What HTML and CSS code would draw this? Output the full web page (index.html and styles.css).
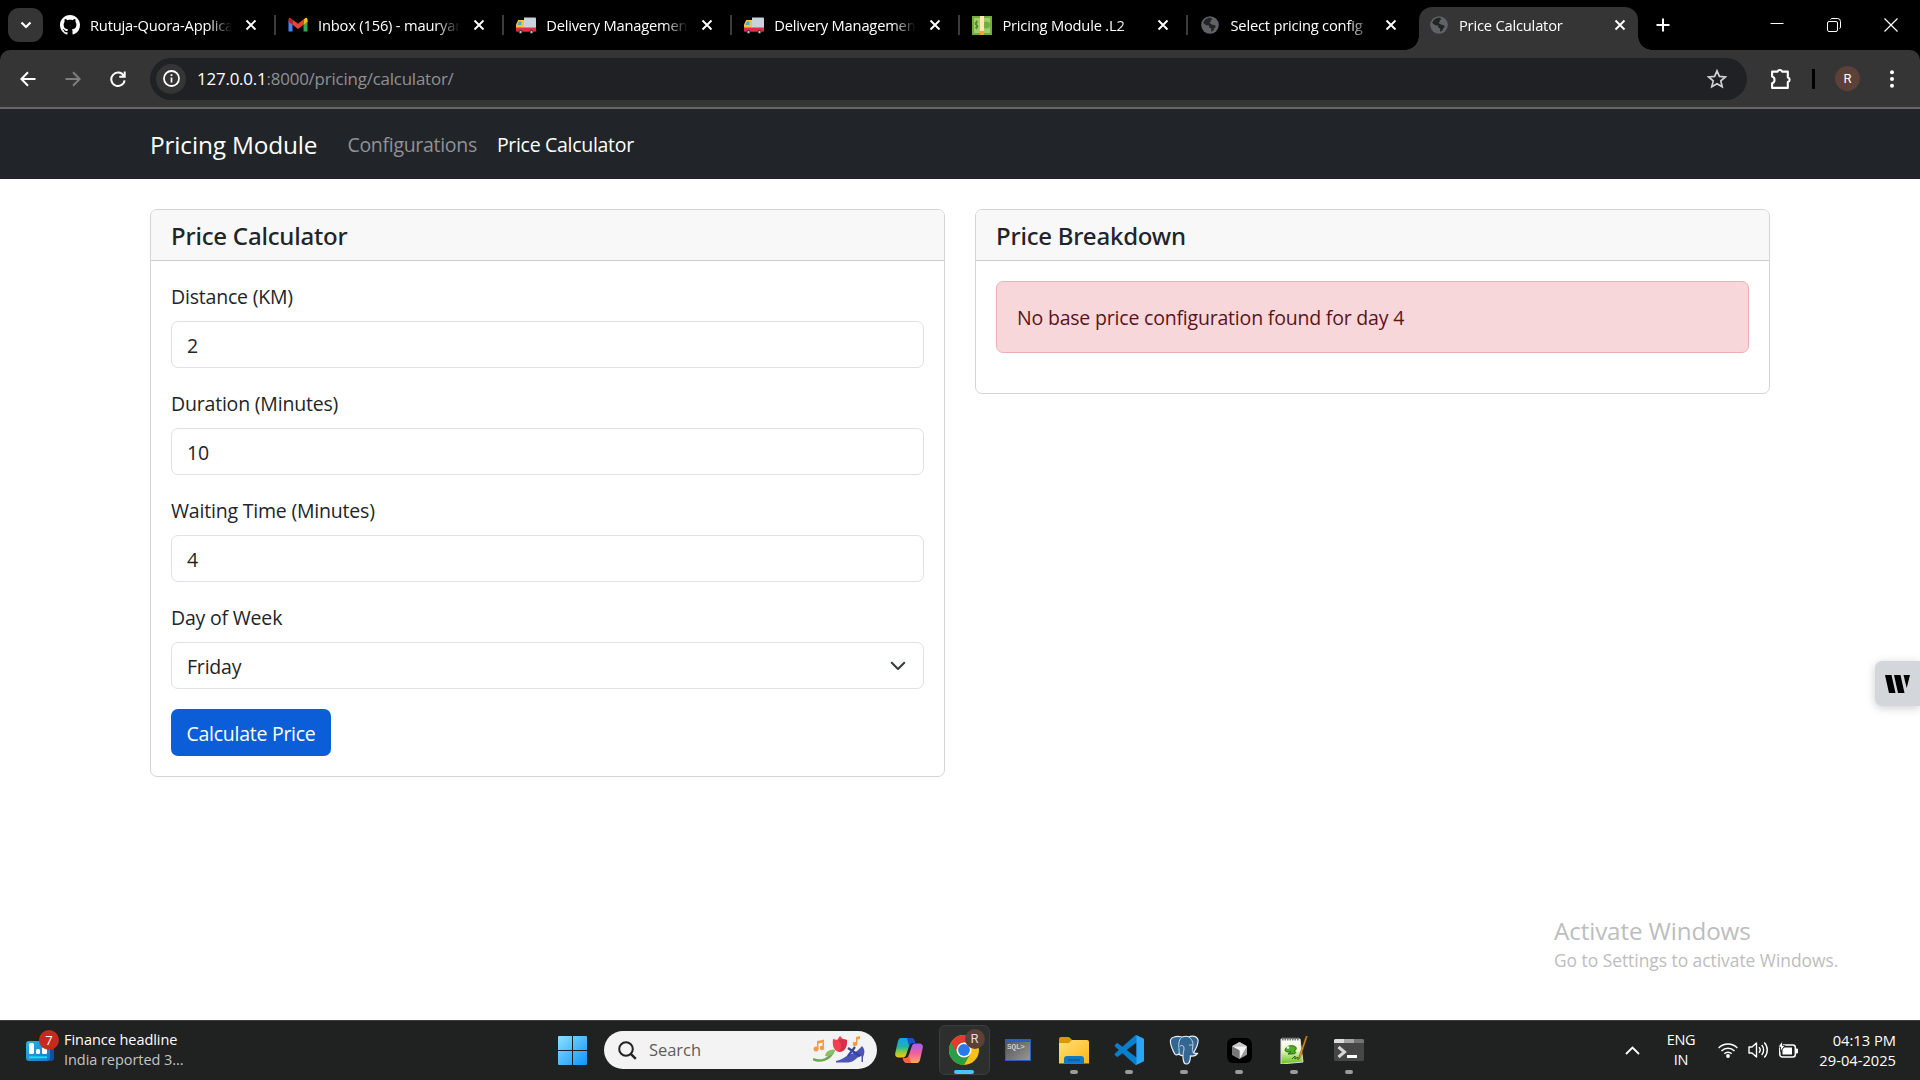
FILE: index.html
```html
<!DOCTYPE html>
<html lang="en">
<head>
<meta charset="utf-8">
<title>Price Calculator</title>
<link rel="stylesheet" href="styles.css">
</head>
<body>
<svg class="defs" aria-hidden="true">
  <defs>
    <linearGradient id="g-win" x1="0" y1="0" x2="1" y2="1"><stop offset="0" stop-color="#8be0ff"/><stop offset="1" stop-color="#0f94fb"/></linearGradient>
    <linearGradient id="g-folder" x1="0" y1="0" x2="1" y2="1"><stop offset="0" stop-color="#ffe07a"/><stop offset="1" stop-color="#fdb714"/></linearGradient>
    <linearGradient id="g-news" x1="0" y1="0" x2="1" y2="1"><stop offset="0" stop-color="#27b7dd"/><stop offset="1" stop-color="#1a73d0"/></linearGradient>
    <linearGradient id="g-cop1" x1="0" y1="0" x2="0" y2="1"><stop offset="0" stop-color="#12a2ee"/><stop offset=".45" stop-color="#1fb4b0"/><stop offset=".75" stop-color="#9ccb30"/><stop offset="1" stop-color="#f3c71c"/></linearGradient>
    <linearGradient id="g-cop2" x1="0" y1="0" x2="0" y2="1"><stop offset="0" stop-color="#a25ff0"/><stop offset=".5" stop-color="#f0609d"/><stop offset="1" stop-color="#ffab5c"/></linearGradient>
    <linearGradient id="g-npp" x1="0" y1="0" x2="0" y2="1"><stop offset="0" stop-color="#fff"/><stop offset=".45" stop-color="#e9f7c8"/><stop offset="1" stop-color="#5fc414"/></linearGradient>
    <symbol id="close" viewBox="0 0 12 12"><path d="M1.5 1.5l9 9M10.500 1.500l-9 9" stroke="#fff" stroke-width="1.900" fill="none"/></symbol>
    <symbol id="truck" viewBox="0 0 20 20"><path d="M8 2.500h11a1 1 0 0 1 1 1V13H8z" fill="#c9d3de"/><path d="M2.200 5H8v8H0V9.500z" fill="#f9c43c"/><path d="M2.800 6.500h2.700V10H1.500z" fill="#4aa5e8"/><path d="M0 12.500h20v3.300a1 1 0 0 1-1 1H1a1 1 0 0 1-1-1z" fill="#dd2e44"/><circle cx="4.500" cy="17" r="2" fill="#30363b"/><circle cx="4.500" cy="17" r="1" fill="#ccd6dd"/><circle cx="15.500" cy="17" r="2" fill="#30363b"/><circle cx="15.500" cy="17" r="1" fill="#ccd6dd"/></symbol>
    <symbol id="globe" viewBox="0 0 18 18"><circle cx="9" cy="9" r="8.800" fill="#5f6368"/><path d="M10 1.800c-3.500-.5-6.800 1.800-7.800 5.200l3 2.200 2.800.2.300 2.300 2 .8-.3 3.200c2.700-.4 3-2.300 3.200-3.400l1.500-1-.6-2.100-3.300-.6-2.400-1.800 1.300-1 .2-1.700 1.700-.5z" fill="#242424"/></symbol>
  </defs>
</svg>

<header class="browser">
  <div class="tabstrip">
    <div class="tab-search"><svg width="12" height="8" viewBox="0 0 12 8"><path d="M1.500 1.500L6 6l4.500-4.500" fill="none" stroke="#fff" stroke-width="2.200"/></svg></div>
    <div class="tab"><svg class="fav" viewBox="0 0 16 16"><path fill="#fff" d="M8 0C3.580 0 0 3.580 0 8c0 3.540 2.290 6.530 5.470 7.590.4.070.55-.17.55-.38 0-.19-.01-.82-.01-1.490-2.010.37-2.530-.49-2.690-.94-.09-.23-.48-.94-.82-1.130-.28-.15-.68-.52-.01-.53.63-.01 1.080.58 1.230.82.72 1.210 1.870.87 2.330.66.070-.52.28-.87.51-1.070-1.780-.2-3.640-.89-3.640-3.950 0-.87.31-1.590.82-2.150-.08-.2-.36-1.020.08-2.120 0 0 .67-.21 2.200.82.64-.18 1.320-.27 2-.27s1.360.09 2 .27c1.530-1.040 2.200-.82 2.200-.82.44 1.100.16 1.920.08 2.120.51.56.82 1.270.82 2.150 0 3.070-1.870 3.750-3.650 3.950.29.25.54.73.54 1.480 0 1.070-.01 1.930-.01 2.200 0 .21.15.46.55.38A8 8 0 0 0 16 8c0-4.420-3.580-8-8-8z"/></svg><span class="tab-title">Rutuja-Quora-Applica</span><svg class="x"><use href="#close"/></svg></div>
    <div class="tab"><svg class="fav" viewBox="0 0 20 20"><path d="M.5 5v11.500h4V8z" fill="#4285f4"/><path d="M19.500 5v11.500h-4V8z" fill="#34a853"/><path d="M15.500 4.500l2-1.500c1-.6 2 0 2 1.500v2.300l-4 3z" fill="#fbbc04"/><path d="M4.500 4.500l-2-1.500c-1-.6-2 0-2 1.500v2.300l4 3z" fill="#c5221f"/><path d="M4.500 4.500L10 8.700l5.500-4.200v5.300L10 13.900 4.500 9.800z" fill="#ea4335"/></svg><span class="tab-title">Inbox (156) - mauryar</span><svg class="x"><use href="#close"/></svg></div>
    <div class="tab"><svg class="fav"><use href="#truck"/></svg><span class="tab-title">Delivery Managemen</span><svg class="x"><use href="#close"/></svg></div>
    <div class="tab"><svg class="fav"><use href="#truck"/></svg><span class="tab-title">Delivery Managemen</span><svg class="x"><use href="#close"/></svg></div>
    <div class="tab"><svg class="fav" viewBox="0 0 20 20"><path fill="#71ae3c" d="M0 1h20v19H0z"/><path d="M2 3h16v15H2z" fill="#a1cf6b"/><circle cx="14.500" cy="10" r="3.500" fill="#71ae3c"/><path d="M8 1h4v15H8z" fill="#ffe8b6"/><path d="M8 16h4v4H8z" fill="#f4a62a"/><path d="M6 7c-3-1-3.500 2.500-1.500 3S6 13.500 3 12.500M4.600 5.500v8.700" stroke="#4d872a" stroke-width="1.100" fill="none"/></svg><span class="tab-title">Pricing Module .L2</span><svg class="x"><use href="#close"/></svg></div>
    <div class="tab no-divider"><svg class="fav globe"><use href="#globe"/></svg><span class="tab-title">Select pricing config</span><svg class="x"><use href="#close"/></svg></div>
    <div class="tab active"><svg class="fav globe"><use href="#globe"/></svg><span class="tab-title">Price Calculator</span><svg class="x"><use href="#close"/></svg></div>
    <svg class="new-tab" width="14" height="14" viewBox="0 0 14 14"><path d="M7 .5v13M.5 7h13" stroke="#fff" stroke-width="2"/></svg>
    <div class="window-controls">
      <svg width="14" height="14" viewBox="0 0 14 14"><path d="M.5 5.500h13" stroke="#fff"/></svg>
      <svg width="14" height="14" viewBox="0 0 14 14"><rect x=".5" y="3.500" width="10" height="10" rx="1.500" fill="none" stroke="#fff"/><path d="M3.500 1.500c.3-.7.800-1 1.500-1h5.500a3 3 0 0 1 3 3V9c0 .7-.3 1.200-1 1.500" fill="none" stroke="#fff"/></svg>
      <svg width="14" height="14" viewBox="0 0 14 14"><path d="M.5.5l13 13M13.500.5l-13 13" stroke="#fff" stroke-width="1.200"/></svg>
    </div>
  </div>
  <div class="toolbar">
    <svg class="tool" viewBox="0 0 16 16"><path d="M15.500 8H1.500M8 1.300L1.400 8 8 14.700" fill="none" stroke="#fff" stroke-width="2"/></svg>
    <svg class="tool" viewBox="0 0 16 16"><path d="M.5 8h14M8 1.300L14.600 8 8 14.700" fill="none" stroke="#7e7e7e" stroke-width="2"/></svg>
    <svg class="tool" viewBox="0 0 16 16"><path d="M13.700 4.800A6.700 6.700 0 1 0 14.600 9.300M14.700.5v5.300H9.300" fill="none" stroke="#fff" stroke-width="2"/></svg>
    <div class="omnibox">
      <div class="site-info"><svg width="17" height="17" viewBox="0 0 17 17"><circle cx="8.500" cy="8.500" r="7.500" fill="none" stroke="#fff" stroke-width="1.800"/><path d="M8.500 7.500v5M8.500 4.300v1.800" stroke="#fff" stroke-width="1.700"/></svg></div>
      <span class="url">127.0.0.1<span>:8000/pricing/calculator/</span></span>
      <svg class="star" width="20" height="20" viewBox="0 0 20 20"><path d="M10 1.800l2.400 5.600 6 .5-4.600 4 1.400 5.900L10 14.700l-5.200 3.100 1.400-5.900-4.600-4 6-.5z" fill="none" stroke="#d0d0d0" stroke-width="1.700"/></svg>
    </div>
    <svg class="ext" width="22" height="22" viewBox="0 0 21 21"><path d="M2 3.500h5.200a2.300 2.300 0 0 1 4.400 0H17V9a2.200 2.200 0 0 1 0 4.300V19H2v-4.500a3.300 3.300 0 0 0 0-6.300z" fill="none" stroke="#fff" stroke-width="2" stroke-linejoin="round"/></svg>
    <div class="tool-divider"></div>
    <div class="avatar">R</div>
    <svg class="menu" width="4" height="18" viewBox="0 0 4 18"><g fill="#fff"><circle cx="2" cy="2.200" r="2"/><circle cx="2" cy="9" r="2"/><circle cx="2" cy="15.800" r="2"/></g></svg>
  </div>
</header>

<nav class="navbar">
  <div class="container">
    <a class="brand">Pricing Module</a>
    <a class="nav-link">Configurations</a>
    <a class="nav-link current">Price Calculator</a>
  </div>
</nav>

<main class="page">
  <div class="container row">
    <section class="card">
      <h5 class="card-header">Price Calculator</h5>
      <form class="card-body">
        <div class="field"><label>Distance (KM)</label><div class="control">2</div></div>
        <div class="field"><label>Duration (Minutes)</label><div class="control">10</div></div>
        <div class="field"><label>Waiting Time (Minutes)</label><div class="control">4</div></div>
        <div class="field"><label>Day of Week</label><div class="control select">Friday<svg width="20" height="15" viewBox="0 0 16 12"><path fill="none" stroke="#343a40" stroke-linecap="round" stroke-linejoin="round" stroke-width="1.600" d="m3 3 5 5 5-5"/></svg></div></div>
        <button class="btn" type="button">Calculate Price</button>
      </form>
    </section>
    <section class="card">
      <h5 class="card-header">Price Breakdown</h5>
      <div class="card-body">
        <div class="alert">No base price configuration found for day 4</div>
      </div>
    </section>
  </div>
  <div class="side-widget"><svg width="25" height="18" viewBox="0 0 25 18"><path d="M0 0h6.500l4 18H4zM9 0h6.500l4 18H13zM18.500 0H25l-3.300 13z"/></svg></div>
  <div class="watermark"><p class="wm-title">Activate Windows</p><p class="wm-text">Go to Settings to activate Windows.</p></div>
</main>

<footer class="taskbar">
  <div class="widgets">
    <div class="news">
      <svg width="28" height="20" viewBox="0 0 28 20"><path d="M23 1h3a2 2 0 0 1 2 2v14a3 3 0 0 1-3 3h-2z" fill="#0f4fa0"/><rect width="24" height="20" rx="3" fill="url(#g-news)"/><g fill="#fff"><rect x="3" y="2" width="5" height="11" rx="1.500"/><rect x="10" y="8" width="4" height="5" rx="1.500"/><rect x="16" y="6" width="5" height="7" rx="1.500"/></g><path d="M3 16.300h18" stroke="#18dcf2" stroke-width="2"/></svg>
      <span class="badge">7</span>
    </div>
    <div class="headline"><div>Finance headline</div><div class="dim">India reported 3...</div></div>
  </div>
  <div class="apps">
    <div class="app"><svg width="29" height="29" viewBox="0 0 29 29"><path fill="url(#g-win)" d="M1 0h13v14H0V1a1 1 0 0 1 1-1zM15 0h13a1 1 0 0 1 1 1v13H15zM0 15h14v14H1a1 1 0 0 1-1-1zM15 15h14v13a1 1 0 0 1-1 1H15z"/></svg></div>
    <div class="search">
      <svg width="19" height="19" viewBox="0 0 19 19"><circle cx="8" cy="8" r="6.800" fill="none" stroke="#222" stroke-width="2"/><path d="M12.800 12.800l5 5" stroke="#222" stroke-width="2.400"/></svg>
      <span>Search</span>
      <svg class="doodle" width="52" height="28" viewBox="0 0 52 28"><path d="M0 23c7 3.500 17 1 21-9" fill="none" stroke="#6aa84b" stroke-width="2.500"/><path d="M12 20c1-5 5-7 10-6-2 5-5 7-10 6z" fill="#8abf67"/><path d="M20 3l4 1 3-4 3 3 4 1c0 7-2 12-8 12-5-1-7-6-6-13z" fill="#ee4253"/><path d="M25 4c4 3 4 7 1 12l4-1c4-3 4-7 4-11l-4-1z" fill="#d8304b"/><path d="M23 25c5-1 9-4 12-6 8-2 11-6 14-9 3 3 3 7 1 11v5h-1.500v-6c-5 1-7 6-13 6.500H23z" fill="#4a55b5"/><path d="M35 12l12 8M42 11l-7 9" stroke="#37439c" stroke-width="2.200"/><g fill="#f39b45"><circle cx="3" cy="13" r="2.500"/><circle cx="9" cy="12" r="2.300"/><path d="M4 5l7-1.500V12h-1.500V6.500L5.500 7.500V13H4zM43 1l4-1v3l-2.600.6V8H43z"/><circle cx="42" cy="8" r="2.300"/></g></svg>
    </div>
    <div class="app"><svg width="28" height="25" viewBox="0 0 28 25"><path d="M6 0h10c3 0 3.500 3 4.200 5h-3c-1.800 0-2.500 1-3.100 3l-3 9c-.7 2-2 2.500-4 2.500H4C0 19.500-.3 17 .5 14L3 3c.6-2 1.500-3 3-3z" fill="url(#g-cop1)"/><path d="M12 0h4c3 0 3.500 3 4.200 5h-3c-1.800 0-2.500 1-3.100 3z" fill="#1850cf"/><path d="M22 25H12c-3 0-3.500-3-4.200-5h3c1.800 0 2.500-1 3.100-3l3-9c.7-2 2-2.500 4-2.500H24c4 0 4.300 2.500 3.500 5.500L25 22c-.6 2-1.500 3-3 3z" fill="url(#g-cop2)"/><path d="M16 25h-4c-3 0-3.500-3-4.200-5h3c1.800 0 2.500-1 3.100-3z" fill="#f2643d"/></svg></div>
    <div class="app focused">
      <svg width="30" height="30" viewBox="0 0 48 48"><circle cx="24" cy="24" r="24" fill="#fbc116"/><path d="M24 24L3.200 12A24 24 0 0 0 24 48l10.400-18z" fill="#2a9d48"/><path d="M24 12h20.800A24 24 0 0 0 3.200 12l10.400 18z" fill="#e33b2e"/><circle cx="24" cy="24" r="12" fill="#fff"/><circle cx="24" cy="24" r="9.500" fill="#2979ed"/></svg>
      <span class="profile">R</span><i class="run wide"></i>
    </div>
    <div class="app"><div class="sql">SQL&gt;</div></div>
    <div class="app"><svg width="30" height="27" viewBox="0 0 30 27"><path d="M0 2a2 2 0 0 1 2-2h7c2 0 3 2 4 3v5H0z" fill="#dd9800"/><path d="M0 6h10l3-3h15a2 2 0 0 1 2 2v21.500H0z" fill="url(#g-folder)"/><path d="M5 26.500V22a3 3 0 0 1 3-3h14a3 3 0 0 1 3 3v4.500z" fill="#1078c9"/><path d="M9 23h12" stroke="#074e8c"/></svg><i class="run"></i></div>
    <div class="app"><svg width="30" height="30" viewBox="0 0 100 100"><path d="M73 0l25 12q2 2 2 5v66q0 3-2 5L73 100l-5-3L4 39q-4-3-1-6l5-5q3-2 6 0l61 47V25L14 72q-3 2-6 0l-5-5q-3-3 1-6L68 3z" fill="#0a7fcb"/><path d="M73 0l25 12q2 2 2 5v66q0 3-2 5L73 100q-3-1 2-6V6q0-5-2-6z" fill="#2ba5f5"/></svg><i class="run"></i></div>
    <div class="app"><svg width="30" height="30" viewBox="0 0 30 30"><path d="M5 2c4-1.500 6-.5 8 0 3-1 5-1 7-.2 3-1.300 8-1 9 3 .7 4-2 9-4.500 13 1.200 1 3 .4 4 .6-1.500 2.500-5 2.800-7 2.500-.5 3 .2 8-4 8.100-4 .2-3-5-3.700-8.500-2 .5-3-.5-4-1.500C6 22 4.500 17 2.600 12 .5 6 1 3 5 2z" fill="#336791" stroke="#e8eef3" stroke-width="1.200"/><path d="M12.500 2.500C9.500 5 9.500 10 10 14c.3 2-.3 3.500.8 5M20 2c4 3 4.500 7 3.500 11-.3 2 0 3 .5 4.500M11 11c2-1 4-.5 4 2 0 3-1 5-1 7.500M20 10.500c1-.7 2.500-.8 3.500 0" fill="none" stroke="#e8eef3" stroke-width=".8"/></svg><i class="run"></i></div>
    <div class="app"><svg width="25" height="25" viewBox="0 0 25 25"><rect width="25" height="25" rx="6" fill="#000"/><path d="M12.500 4l7.500 4.300v8.400L12.500 21 5 16.700V8.300z" fill="#9a9a9a"/><path d="M5 8.300h15L12.500 21v-8.500z" fill="#f2f2f2"/><path d="M5 8.300L12.500 4 20 8.300z" fill="#c6c6c6"/><path d="M5 8.300l7.500 4.200V21L5 16.700z" fill="#777"/></svg><i class="run"></i></div>
    <div class="app"><svg width="28" height="28" viewBox="0 0 28 28"><path d="M1 3h19l3 23L1 28z" fill="url(#g-npp)" stroke="#ddd"/><path d="M2 3h17" stroke="#777" stroke-width="3" stroke-dasharray="1.500 1"/><path d="M5 14c1-4 5-5 9-4 3 1 3 4 0 5 3 1 2 3-2 3H8l3-2c-3 0-6 0-6-2z" fill="#4fae22" stroke="#19520c" stroke-width=".8"/><circle cx="8" cy="11.500" r="1.300" fill="#fff"/><path d="M12 23l3-3v3l3-2v3" stroke="#225d11" fill="none"/><path d="M27.500 0l-7 21-1.500 2 .2-3L26 0z" fill="#eda124" stroke="#8c4b13" stroke-width=".6"/></svg><i class="run"></i></div>
    <div class="app"><svg width="30" height="22" viewBox="0 0 30 22"><rect width="30" height="22" rx="1.500" fill="#464646"/><path d="M1.500 0h8.500v4H0V1.500A1.500 1.500 0 0 1 1.500 0z" fill="#ddd"/><path d="M10 0h10v4H10z" fill="#a5a5a5"/><path d="M20 0h8.500A1.500 1.500 0 0 1 30 1.500V4H20z" fill="#747474"/><path d="M4.500 8l6 5-6 5" stroke="#d6d6d6" stroke-width="3" fill="none"/><path d="M13 17.500h10" stroke="#fff" stroke-width="3"/></svg><i class="run"></i></div>
  </div>
  <div class="tray">
    <svg class="up" width="15" height="9" viewBox="0 0 15 9"><path d="M1 8l6.500-6.500L14 8" fill="none" stroke="#fff" stroke-width="1.800"/></svg>
    <div class="lang">ENG<br>IN</div>
    <svg class="wifi" width="20" height="16" viewBox="0 0 20 16"><g fill="none" stroke="#fff" stroke-width="1.500"><path d="M.7 6a13 13 0 0 1 18.600 0M3.500 9a9.200 9.200 0 0 1 13 0M6.300 11.700a5.300 5.300 0 0 1 7.400 0"/></g><circle cx="10" cy="14" r="1.900" fill="#fff"/></svg>
    <svg class="sound" width="20" height="18" viewBox="0 0 20 18"><g fill="none" stroke="#fff" stroke-width="1.400"><path d="M1 6h3l4.500-4v14L4 12H1z" stroke-linejoin="round"/><path d="M11 6.300a4 4 0 0 1 0 5.400M13.700 4a7.500 7.500 0 0 1 0 10M16.300 1.500a11 11 0 0 1 0 15"/></g></svg>
    <svg class="battery" width="21" height="17" viewBox="0 0 21 17"><rect x="1.800" y="4" width="15.500" height="12" rx="2.500" fill="none" stroke="#fff" stroke-width="1.500"/><path d="M4.500 8l2-1.500h7.500v7H4.500z" fill="#fff"/><path d="M18 8h1.500v4H18z" fill="#fff" stroke="#fff"/><path d="M4.500 0L0 6h2.500v4.500L7 4.500H4.500z" fill="#fff" stroke="#202020" stroke-width=".8"/></svg>
    <div class="clock">04:13 PM<br>29-04-2025</div>
  </div>
</footer>
</body>
</html>
```
FILE: styles.css
```css
* { box-sizing: border-box; margin: 0; }
body {
  width: 1920px;
  height: 1080px;
  overflow: hidden;
  display: flex;
  flex-direction: column;
  background: #fff;
  color: #212529;
  font: 400 19.5px/30px "Open Sans", "Noto Sans", sans-serif;
  letter-spacing: -.01em;
}
svg { flex: none; display: block; }
.defs { position: absolute; width: 0; height: 0; }

/* Browser chrome */
.browser { background: #000; color: #fff; }
.tabstrip { height: 50px; display: flex; align-items: stretch; padding-left: 8px; }
.tab-search {
  width: 35px; height: 34px; margin: 8px 5px 0 0;
  border-radius: 11px; background: #353535;
  display: flex; align-items: center; justify-content: center;
}
.tab {
  width: 228.100px; flex: none; position: relative;
  display: flex; align-items: center; padding-left: 12px;
  font-size: 14.700px;
}
.tab::after { content: ""; width: 2px; height: 20px; background: #3c3c3c; margin-left: 17px; }
.tab.no-divider::after, .tab.active::after { display: none; }
.fav { width: 20px; height: 20px; }
.fav.globe { width: 18px; height: 18px; margin: 0 1px; }
.tab-title {
  width: 142px; margin: 0 13px 0 10px; flex: none;
  white-space: nowrap; overflow: hidden;
  -webkit-mask-image: linear-gradient(90deg, #000 118px, transparent 142px);
  mask-image: linear-gradient(90deg, #000 118px, transparent 142px);
}
.tab .x { width: 12px; height: 12px; }
.tab.active {
  width: 219px; margin: 7px 0 0 2.400px; padding: 0 0 7px 10px;
  background: #353535; border-radius: 13px 13px 0 0;
}
.tab.active::before {
  content: ""; position: absolute; left: -14px; right: -14px; bottom: 0; height: 14px;
  background:
    radial-gradient(circle at 0 0, transparent 13.500px, #353535 14px) left / 14px 14px no-repeat,
    radial-gradient(circle at 100% 0, transparent 13.500px, #353535 14px) right / 14px 14px no-repeat;
}
.new-tab { margin: 18px 0 0 18px; }
.window-controls { margin: 18px 22px 0 auto; display: flex; gap: 43px; }

.toolbar {
  height: 59px; background: #353535; border-bottom: 2px solid #666;
  border-radius: 10px 10px 0 0;
  display: flex; align-items: center; padding: 0 26px 0 20px;
}
.tool { width: 16px; height: 16px; margin-right: 29px; }
.omnibox {
  width: 1597px; height: 42px; border-radius: 21px; background: #202124;
  display: flex; align-items: center; padding: 0 20px 0 6px; margin-left: -5px;
}
.site-info {
  width: 30px; height: 30px; border-radius: 50%; background: #353535;
  display: flex; align-items: center; justify-content: center; margin-right: 11px;
}
.url { font-size: 16.900px; padding-top: 1px; }
.url span { color: #8f9194; }
.star { margin-left: auto; }
.ext { margin-left: 23px; }
.tool-divider { width: 3px; height: 20px; background: #000; margin-left: 20px; }
.avatar {
  width: 25px; height: 25px; border-radius: 50%; background: #5d4037;
  font: 13px/25px Roboto, sans-serif; text-align: center; margin-left: 20px;
}
.menu { margin-left: auto; }

/* Page */
.container { width: 1620px; margin: 0 auto; display: flex; }
.navbar { height: 70px; background: #212529; display: flex; align-items: center; padding-top: 2px; }
.navbar .container { align-items: center; color: #fff; }
.brand { font-size: 24.400px; margin-right: 30px; letter-spacing: -.15px; }
.nav-link { color: #909294; margin-right: 20px; letter-spacing: -.3px; }
.nav-link.current { color: #fff; }

.page { flex: 1; position: relative; padding-top: 30px; }
.row { gap: 30px; align-items: flex-start; }
.card { flex: 1; border: 1px solid #d3d4d5; border-radius: 7px; overflow: hidden; }
.card-header {
  padding: 11px 20px 9px; background: #f8f8f8; border-bottom: 1px solid #cdcdcd;
  font: 500 24px/30px "Noto Sans", sans-serif; letter-spacing: -.2px;
}
.card-body { padding: 20px; }
.field { margin-bottom: 20px; }
.field label { display: block; padding-top: 1px; margin-bottom: 9px; }
.control {
  height: 47px; padding: 9px 15px 0; border: 1px solid #dee2e6; border-radius: 7px;
}
.select { display: flex; justify-content: space-between; }
.select svg { margin-top: 7px; }
.btn {
  display: block; height: 47px; width: 160px; border: 0; border-radius: 7px;
  background: #0b5ed7; color: #fff; font: inherit; letter-spacing: -.26px; padding: 2px 0 0;
}
.alert {
  margin-bottom: 20px; padding: 21px 20px 19px; height: 72px;
  border: 1px solid #f1aeb5; border-radius: 7px; background: #f8d7da; color: #58151c;
}

.side-widget {
  position: absolute; right: 0; top: 482px; width: 45px; height: 45px;
  border-radius: 7px 0 0 7px; background: #d3d6db; box-shadow: 0 2px 10px rgba(0, 0, 0, .2);
  display: flex; align-items: center; padding-left: 10px;
}
.watermark { position: absolute; left: 1554px; top: 736px; color: #bdbdbd; white-space: nowrap; }
.wm-title { font-size: 24.200px; line-height: 32px; letter-spacing: -.12px; }
.wm-text { font-size: 17.400px; line-height: 26px; letter-spacing: -.02px; }

/* Taskbar */
.taskbar {
  height: 60px; background: #202121; border-top: 1px solid #3c3e3e; color: #fff;
  display: flex; align-items: center; font-size: 14.500px; line-height: 20px; letter-spacing: -.05px;
  padding-bottom: 1px;
}
.widgets { width: 544.500px; padding-left: 26px; display: flex; }
.news { position: relative; width: 38px; padding-top: 10px; }
.badge {
  position: absolute; left: 13px; top: -1px; width: 20px; height: 20px; border-radius: 50%;
  background: #c42b1c; text-align: center; font-size: 13px;
}
.headline { white-space: nowrap; margin-top: -1px; }
.dim { color: #c4c4c4; }
.apps { display: flex; align-items: center; }
.app {
  width: 55px; height: 50px; position: relative;
  display: flex; align-items: center; justify-content: center;
}
.search {
  width: 273px; height: 38px; margin: 0 4.500px; border-radius: 19px; background: #f3f3f3;
  display: flex; align-items: center; padding: 0 12px 0 14px; color: #5d5d5d; font-size: 16.500px;
}
.search span { margin-left: 12px; }
.doodle { margin-left: auto; }
.focused::before {
  content: ""; position: absolute; inset: 0 2px; z-index: -1;
  border: 1px solid #3c3d3d; border-radius: 6px; background: #2d2e2e;
}
.focused { z-index: 0; }
.profile {
  position: absolute; left: 28px; top: 4px; width: 20px; height: 20px; border-radius: 50%;
  background: #5d4037; color: #ddd; font: 13px/20px Roboto, sans-serif; text-align: center;
}
.run { position: absolute; left: 23.500px; bottom: 1px; width: 8px; height: 4px; border-radius: 2px; background: #9b9b9b; }
.run.wide { left: 17.500px; width: 20px; background: #4cc2ff; }
.sql {
  width: 26px; height: 22px; border: 1px solid #2c5cc5; border-top-width: 3px; background: linear-gradient(135deg, #555, #989898);
  color: #eee; font: 7.500px/9px "Liberation Mono", monospace; padding: 1px; margin-right: 2px;
}
.tray { margin-left: auto; display: flex; align-items: center; padding-right: 24px; }
.lang { width: 40px; text-align: center; margin: 0 17px 0 21px; letter-spacing: -.3px; }
.sound { margin-left: 10px; }
.battery { margin: -2px 0 0 10px; }
.clock { text-align: right; width: 90px; margin-left: 7px; font-size: 14.700px; letter-spacing: 0; margin-top: -1px; }
```
